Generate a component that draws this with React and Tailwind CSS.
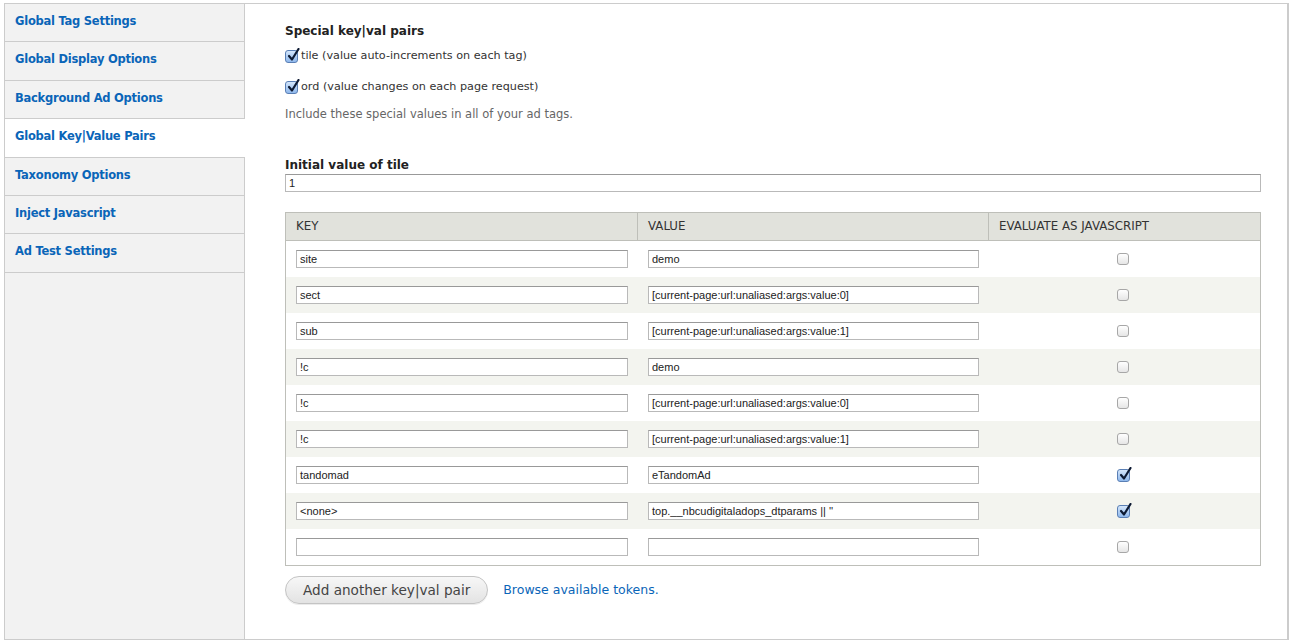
import React from 'react';

const tabs = [
  'Global Tag Settings',
  'Global Display Options',
  'Background Ad Options',
  'Global Key|Value Pairs',
  'Taxonomy Options',
  'Inject Javascript',
  'Ad Test Settings',
];

const rows = [
  ['site', 'demo', false],
  ['sect', '[current-page:url:unaliased:args:value:0]', false],
  ['sub', '[current-page:url:unaliased:args:value:1]', false],
  ['!c', 'demo', false],
  ['!c', '[current-page:url:unaliased:args:value:0]', false],
  ['!c', '[current-page:url:unaliased:args:value:1]', false],
  ['tandomad', 'eTandomAd', true],
  ['<none>', 'top.__nbcudigitaladops_dtparams || \'\'', true],
  ['', '', false],
];

const Check = ({ checked }) =>
  checked ? (
    <span className="relative inline-block w-[13px] h-[13px] rounded-[3px] border border-[#5a7fb5] bg-gradient-to-b from-[#d4e6fb] to-[#8fb8ec] shrink-0">
      <svg className="absolute left-[1px] top-[-3px]" width="13" height="14" viewBox="0 0 13 14">
        <path d="M2 8 L5 11.5 L11.5 1" fill="none" stroke="#0d1a33" strokeWidth="2.2" strokeLinecap="round" strokeLinejoin="round" />
      </svg>
    </span>
  ) : (
    <span className="inline-block w-[12px] h-[12px] rounded-[3px] border border-[#a7a7a7] bg-gradient-to-b from-white to-[#e6e6e6] shrink-0" />
  );

const Field = ({ value, className = '' }) => (
  <div className={`h-[18px] border border-[#b9b9b9] border-t-[#999] bg-white px-[3px] text-[11px] leading-[16px] text-[#222] ${className}`} style={{ fontFamily: '"Liberation Sans", Arial, sans-serif' }}>
    {value}
  </div>
);

export default function App() {
  return (
    <div className="min-h-screen bg-white pt-[3px] pl-[4px] pr-[1px] pb-[2px]" style={{ fontFamily: '"DejaVu Sans", Verdana, sans-serif' }}>
      <div className="flex h-[637px] border border-[#cccccc] border-r-2">
        <div className="w-[240px] shrink-0 bg-[#f2f2f2] border-r border-[#cccccc] flex flex-col">
          {tabs.map((t, i) => (
            <div
              key={t}
              className={`h-[38.4px] px-[10px] pt-[9px] border-b border-[#cccccc] text-[11.5px] font-bold text-[#0a65b8] tracking-[-0.25px] ${i === 3 ? 'bg-white mr-[-1px]' : ''}`}
            >
              {t}
            </div>
          ))}
        </div>
        <div className="flex-1 pl-[40px] pr-[26px] pt-[18px] text-[12px] text-[#333]">
          <div className="font-bold text-[12px] text-[#222] mb-[7px]">Special key|val pairs</div>
          <div className="flex items-center gap-[3px] h-[18px] text-[11.2px] text-[#333]">
            <Check checked />
            <span>tile (value auto-increments on each tag)</span>
          </div>
          <div className="flex items-center gap-[3px] h-[18px] mt-[13px] text-[11.2px] text-[#333]">
            <Check checked />
            <span>ord (value changes on each page request)</span>
          </div>
          <div className="mt-[10px] text-[11.5px] text-[#666]">Include these special values in all of your ad tags.</div>

          <div className="mt-[33px] font-bold text-[12px] text-[#222]">Initial value of tile</div>
          <Field value="1" className="mt-0" />

          <div className="mt-[20px] border border-[#bebfb9]">
            <div className="grid grid-cols-[352px_351px_1fr] h-[28px] bg-[#e1e2dc] border-b border-[#bebfb9] text-[11.8px] text-[#333] uppercase">
              <div className="px-[10px] leading-[27px] border-r border-[#bebfb9]">Key</div>
              <div className="px-[10px] leading-[27px] border-r border-[#bebfb9]">Value</div>
              <div className="px-[10px] leading-[27px]">Evaluate as Javascript</div>
            </div>
            {rows.map(([k, v, c], i) => (
              <div key={i} className={`grid grid-cols-[352px_351px_1fr] h-[36px] items-center ${i % 2 ? 'bg-[#f3f4ef]' : 'bg-white'}`}>
                <div className="pl-[10px] pr-[10px]">
                  <Field value={k} />
                </div>
                <div className="pl-[10px] pr-[10px]">
                  <Field value={v} />
                </div>
                <div className="flex justify-center pr-[3px]">
                  <Check checked={c} />
                </div>
              </div>
            ))}
          </div>

          <div className="mt-[10px] flex items-center gap-[15px]">
            <button className="h-[28px] px-[17px] rounded-full border border-[#c4c4c4] bg-gradient-to-b from-[#f7f7f7] to-[#e3e3e3] text-[13.6px] text-[#444] shadow-[0_1px_0_rgba(0,0,0,0.08)]">
              Add another key|val pair
            </button>
            <a className="text-[12.5px] text-[#0a65b8]">Browse available tokens.</a>
          </div>
        </div>
      </div>
    </div>
  );
}
